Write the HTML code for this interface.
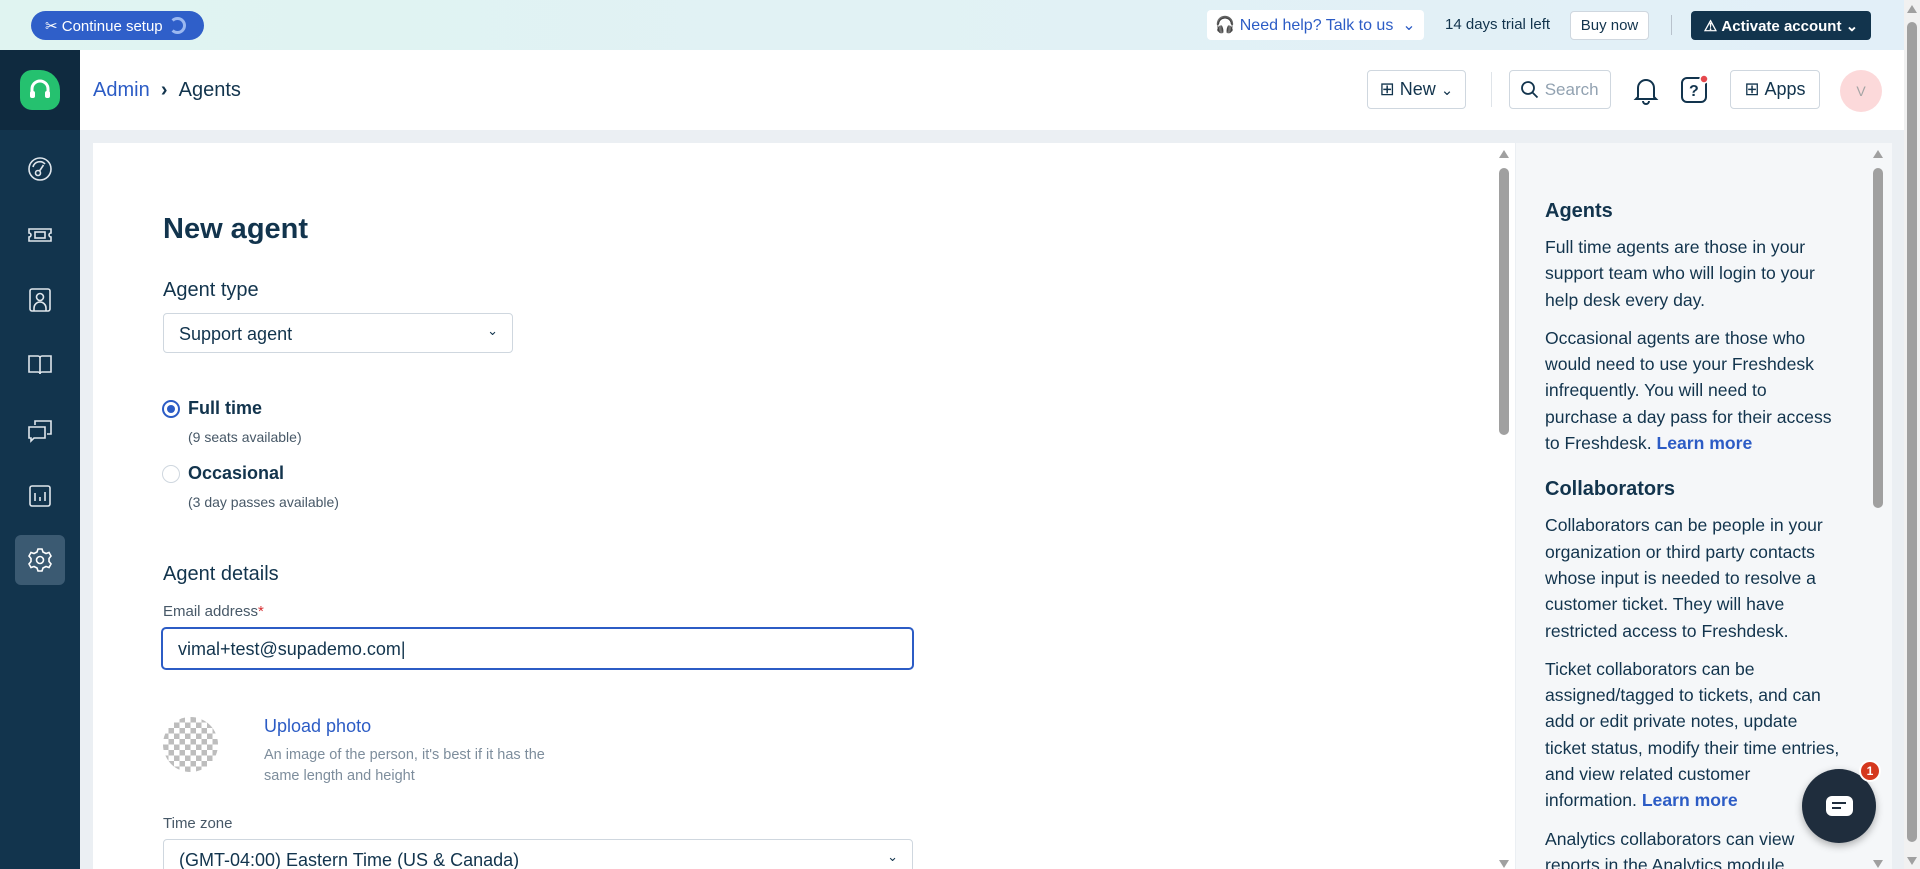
<!DOCTYPE html>
<html style="background:#fff;overflow:hidden"><head><meta charset="utf-8"><style>
*{box-sizing:border-box;margin:0;padding:0}
body{width:1920px;height:869px;overflow:hidden;font-family:"Liberation Sans",sans-serif;background:#ebeff3;position:relative;color:#12344d}
.a{position:absolute}
.top{left:0;top:0;width:1904px;height:50px;background:linear-gradient(90deg,#e0f4f1,#e2eff8)}
.btn{border:1px solid #cfd7df;border-radius:4px;background:#fff;display:flex;align-items:center;justify-content:center}
.side{left:0;top:50px;width:80px;height:819px;background:#12344d}
.ic{left:25px;width:30px;height:30px}
.rp p{font-size:17.6px;line-height:26.3px;color:#12344d;margin-bottom:12px;white-space:nowrap}
.rp h3{font-size:20px;color:#12344d;margin-bottom:11px;font-weight:bold}
.lm{color:#2c5cc5;font-weight:bold}
.sb{background:#a0a0a0;border-radius:5px;width:10px}
.tri{width:0;height:0;border-left:5px solid transparent;border-right:5px solid transparent}
</style></head><body>
<div class="a top"></div>
<div class="a" style="left:31px;top:11px;width:173px;height:29px;background:#2f5fc9;border-radius:15px;color:#fff;font-size:15px;display:flex;align-items:center;padding-left:14px">✂&nbsp;Continue setup<span style="display:inline-block;width:17px;height:17px;border:3px solid #9bb8f0;border-left-color:#2f5fc9;border-radius:50%;margin-left:6px"></span></div>
<div class="a btn" style="left:1207px;top:10px;width:217px;height:30px;border:none;color:#2c5cc5;font-size:16px">🎧&nbsp;Need help? Talk to us &nbsp;⌄</div>
<div class="a" style="left:1445px;top:16px;font-size:15px;color:#12344d">14 days trial left</div>
<div class="a btn" style="left:1570px;top:11px;width:79px;height:29px;font-size:15px">Buy now</div>
<div class="a" style="left:1671px;top:15px;width:1px;height:20px;background:#b8c2cc"></div>
<div class="a" style="left:1691px;top:11px;width:180px;height:29px;background:#12344d;border-radius:4px;color:#fff;font-size:15px;font-weight:bold;display:flex;align-items:center;justify-content:center">⚠&nbsp;Activate account&nbsp;⌄</div>

<div class="a side"></div>
<div class="a" style="left:0;top:50px;width:80px;height:80px;background:#0f2a3f"></div>
<div class="a" style="left:20px;top:70px;width:40px;height:40px;background:#25c16f;border-radius:12px 50% 12px 12px"><svg width="40" height="40" viewBox="0 0 40 40"><path d="M12 24v-5a8 8 0 0 1 16 0v5" fill="none" stroke="#fff" stroke-width="3"/><rect x="10" y="21" width="5" height="7" rx="2" fill="#fff"/><rect x="25" y="21" width="5" height="7" rx="2" fill="#fff"/></svg></div>
<svg class="a ic" style="top:154px" viewBox="0 0 30 30" fill="none" stroke="#dfe6ec" stroke-width="1.6"><circle cx="15" cy="15" r="11"/><circle cx="13" cy="19" r="2.5"/><path d="M14.5 17l4-6M8 13a7 7 0 0 1 12-3"/></svg>
<svg class="a ic" style="top:220px" viewBox="0 0 30 30" fill="none" stroke="#dfe6ec" stroke-width="1.6"><path d="M4 9h22v4a2 2 0 0 0 0 4v4H4v-4a2 2 0 0 0 0-4z"/><rect x="10" y="12" width="10" height="6"/></svg>
<svg class="a ic" style="top:285px" viewBox="0 0 30 30" fill="none" stroke="#dfe6ec" stroke-width="1.6"><rect x="5" y="4" width="20" height="22" rx="2"/><circle cx="15" cy="12" r="3.5"/><path d="M9 26v-3a6 6 0 0 1 12 0v3"/></svg>
<svg class="a ic" style="top:350px" viewBox="0 0 30 30" fill="none" stroke="#dfe6ec" stroke-width="1.6"><path d="M4 6h9a2 2 0 0 1 2 2v16a2 2 0 0 0-2-2H4zM26 6h-9a2 2 0 0 0-2 2v16a2 2 0 0 1 2-2h9z"/></svg>
<svg class="a ic" style="top:415px" viewBox="0 0 30 30" fill="none" stroke="#dfe6ec" stroke-width="1.6"><path d="M10 10V6h16v13h-4M4 12h16v11H9l-3 3v-3H4z"/></svg>
<svg class="a ic" style="top:481px" viewBox="0 0 30 30" fill="none" stroke="#dfe6ec" stroke-width="1.6"><rect x="5" y="5" width="20" height="20" rx="2"/><path d="M10 20v-8M15 20v-4M20 20v-9"/></svg>
<div class="a" style="left:15px;top:535px;width:50px;height:50px;background:#3b5a72;border-radius:6px"></div>
<svg class="a ic" style="top:545px" viewBox="0 0 30 30" fill="none" stroke="#fff" stroke-width="1.6"><circle cx="15" cy="15" r="3.5"/><path d="M13 4h4l1 3 3 1.5 3-1 2 3.5-2 2.5v3l2 2.5-2 3.5-3-1-3 1.5-1 3h-4l-1-3-3-1.5-3 1-2-3.5 2-2.5v-3l-2-2.5 2-3.5 3 1 3-1.5z"/></svg>

<div class="a" style="left:80px;top:50px;width:1824px;height:80px;background:#fff"></div>
<div class="a" style="left:93px;top:79px;font-size:20px"><span style="color:#2c5cc5">Admin</span>&nbsp;&nbsp;<b>›</b>&nbsp;&nbsp;Agents</div>
<div class="a btn" style="left:1367px;top:70px;width:99px;height:39px;font-size:18px">⊞&nbsp;New&nbsp;<small>⌄</small></div>
<div class="a" style="left:1491px;top:72px;width:1px;height:35px;background:#dfe4e9"></div>
<div class="a btn" style="left:1509px;top:70px;width:102px;height:39px;font-size:17px;color:#92a2b1;justify-content:flex-start;padding-left:10px"><svg width="20" height="20" viewBox="0 0 20 20" fill="none" stroke="#12344d" stroke-width="1.8"><circle cx="8" cy="8" r="6"/><path d="M12.5 12.5l5 5"/></svg>&nbsp;Search</div>
<svg class="a" style="left:1632px;top:75px" width="28" height="30" viewBox="0 0 28 30" fill="none" stroke="#12344d" stroke-width="2"><path d="M6 22V13a8 8 0 0 1 16 0v9l2 2H4zM11 26a3 3 0 0 0 6 0"/></svg>
<svg class="a" style="left:1679px;top:74px" width="30" height="32" viewBox="0 0 30 32" fill="none" stroke="#12344d" stroke-width="2"><rect x="3" y="4" width="24" height="24" rx="5"/><text x="10" y="22" font-size="16" font-family="Liberation Sans" fill="#12344d" stroke="none" font-weight="bold">?</text><circle cx="25" cy="5" r="4" fill="#e5484d" stroke="#fff" stroke-width="1.5"/></svg>
<div class="a btn" style="left:1730px;top:70px;width:90px;height:39px;font-size:18px">⊞&nbsp;Apps</div>
<div class="a" style="left:1840px;top:70px;width:42px;height:42px;border-radius:50%;background:#fcd9da;color:#a4a4a4;font-size:14px;display:flex;align-items:center;justify-content:center">V</div>

<div class="a" style="left:93px;top:143px;width:1422px;height:726px;background:#fff"></div>
<div class="a" style="left:1516px;top:143px;width:376px;height:726px;background:#f5f7f9;overflow:hidden">
<div class="a rp" style="left:29px;top:57px;width:340px">
<h3>Agents</h3>
<p>Full time agents are those in your<br>support team who will login to your<br>help desk every day.</p>
<p>Occasional agents are those who<br>would need to use your Freshdesk<br>infrequently. You will need to<br>purchase a day pass for their access<br>to Freshdesk. <span class="lm">Learn more</span></p>
<h3 style="margin-top:22px">Collaborators</h3>
<p>Collaborators can be people in your<br>organization or third party contacts<br>whose input is needed to resolve a<br>customer ticket. They will have<br>restricted access to Freshdesk.</p>
<p>Ticket collaborators can be<br>assigned/tagged to tickets, and can<br>add or edit private notes, update<br>ticket status, modify their time entries,<br>and view related customer<br>information. <span class="lm">Learn more</span></p>
<p>Analytics collaborators can view<br>reports in the Analytics module</p>
</div></div>
<div class="a tri" style="left:1499px;top:150px;border-bottom:8px solid #a0a0a0"></div>
<div class="a sb" style="left:1499px;top:168px;height:267px"></div>
<div class="a tri" style="left:1499px;top:860px;border-top:8px solid #a0a0a0"></div>
<div class="a tri" style="left:1873px;top:150px;border-bottom:8px solid #a0a0a0"></div>
<div class="a sb" style="left:1873px;top:168px;height:340px"></div>
<div class="a tri" style="left:1873px;top:860px;border-top:8px solid #a0a0a0"></div>
<div class="a" style="left:1904px;top:0;width:16px;height:869px;background:#f1f1f1"></div>
<div class="a tri" style="left:1907px;top:5px;border-bottom:8px solid #a0a0a0"></div>
<div class="a sb" style="left:1907px;top:22px;height:820px"></div>
<div class="a tri" style="left:1907px;top:857px;border-top:8px solid #a0a0a0"></div>

<div class="a" style="left:163px;top:213px;font-size:29px;font-weight:bold">New agent</div>
<div class="a" style="left:163px;top:279px;font-size:20px">Agent type</div>
<div class="a" style="left:163px;top:313px;width:350px;height:40px;border:1px solid #cfd7df;border-radius:4px;font-size:18px;padding:10px 15px">Support agent<span style="position:absolute;right:14px;top:9px;font-size:13px">⌄</span></div>
<div class="a" style="left:162px;top:400px;width:18px;height:18px;border-radius:50%;border:2px solid #2c5cc5;background:#fff"><div style="margin:3px;width:8px;height:8px;border-radius:50%;background:#2c5cc5"></div></div>
<div class="a" style="left:188px;top:398px;font-size:18px;font-weight:bold">Full time</div>
<div class="a" style="left:188px;top:429px;font-size:14px;color:#475867">(9 seats available)</div>
<div class="a" style="left:162px;top:465px;width:18px;height:18px;border-radius:50%;border:1px solid #cfd7df"></div>
<div class="a" style="left:188px;top:463px;font-size:18px;font-weight:bold">Occasional</div>
<div class="a" style="left:188px;top:494px;font-size:14px;color:#475867">(3 day passes available)</div>
<div class="a" style="left:163px;top:563px;font-size:20px;font-weight:500">Agent details</div>
<div class="a" style="left:163px;top:603px;font-size:15px;color:#475867">Email address<span style="color:#d72d30">*</span></div>
<div class="a" style="left:161px;top:627px;width:753px;height:43px;border:2px solid #2c5cc5;border-radius:5px;font-size:18px;padding:10px 15px">vimal+test@supademo.com|</div>
<div class="a" style="left:163px;top:717px;width:55px;height:55px;border-radius:50%;background:repeating-conic-gradient(#bdbdbd 0 25%,#fff 0 50%) 0 0/11px 11px"></div>
<div class="a" style="left:264px;top:716px;font-size:18px;color:#2c5cc5">Upload photo</div>
<div class="a" style="left:264px;top:745px;font-size:14.5px;line-height:21px;color:#7d8d9c">An image of the person, it's best if it has the<br>same length and height</div>
<div class="a" style="left:163px;top:815px;font-size:15px;color:#475867">Time zone</div>
<div class="a" style="left:163px;top:839px;width:750px;height:40px;border:1px solid #cfd7df;border-radius:4px;font-size:18px;padding:10px 15px">(GMT-04:00) Eastern Time (US &amp; Canada)<span style="position:absolute;right:14px;top:9px;font-size:13px">⌄</span></div>

<div class="a" style="left:1802px;top:769px;width:74px;height:74px;border-radius:50%;background:#1f2d3d;box-shadow:0 3px 8px rgba(0,0,0,.3)"><div style="position:absolute;left:24px;top:27px;width:27px;height:20px;background:#fff;border-radius:6px"></div><div style="position:absolute;left:30px;top:33px;width:14px;height:2px;background:#1f2d3d"></div><div style="position:absolute;left:30px;top:38px;width:9px;height:2px;background:#1f2d3d"></div></div>
<div class="a" style="left:1859px;top:760px;width:22px;height:22px;border-radius:50%;background:#d5381e;border:2px solid #fff;color:#fff;font-size:12px;font-weight:bold;text-align:center;line-height:18px">1</div>
</body></html>
